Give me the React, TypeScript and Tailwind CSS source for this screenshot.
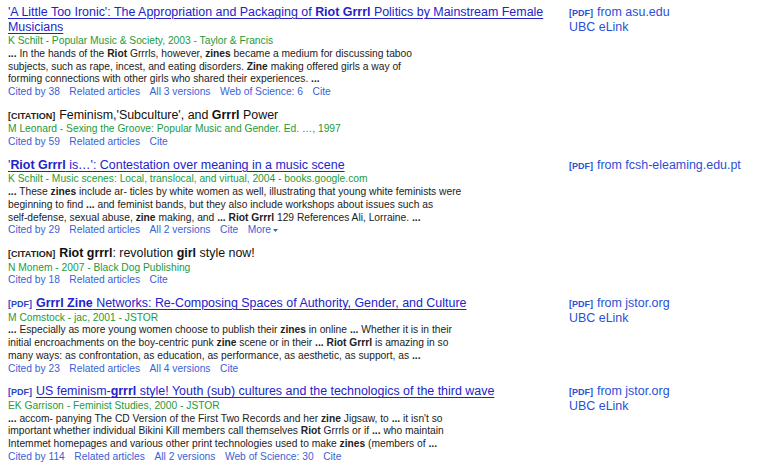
import React from "react";

type Rec = {
  prefix?: "PDF" | "CITATION";
  title: string[];
  isLink: boolean;
  author: string;
  snippet?: string[];
  links: string[];
  more?: boolean;
  right?: { host: string; elink: boolean };
};

function Rich({ text }: { text: string }) {
  const parts = text.split("**");
  return (
    <>
      {parts.map((p, i) =>
        i % 2 === 1 ? (
          <b key={i} className="font-bold">
            {p}
          </b>
        ) : (
          <React.Fragment key={i}>{p}</React.Fragment>
        )
      )}
    </>
  );
}

const recs: Rec[] = [
  {
    title: [
      "'A Little Too Ironic': The Appropriation and Packaging of **Riot Grrrl** Politics by Mainstream Female",
      "Musicians",
    ],
    isLink: true,
    author: "K Schilt - Popular Music & Society, 2003 - Taylor & Francis",
    snippet: [
      "**...** In the hands of the **Riot** Grrrls, however, **zines** became a medium for discussing taboo",
      "subjects, such as rape, incest, and eating disorders. **Zine** making offered girls a way of",
      "forming connections with other girls who shared their experiences. **...**",
    ],
    links: ["Cited by 38", "Related articles", "All 3 versions", "Web of Science: 6", "Cite"],
    right: { host: "asu.edu", elink: true },
  },
  {
    prefix: "CITATION",
    title: ["Feminism,'Subculture', and **Grrrl** Power"],
    isLink: false,
    author: "M Leonard - Sexing the Groove: Popular Music and Gender. Ed. \u2026, 1997",
    links: ["Cited by 59", "Related articles", "Cite"],
  },
  {
    title: ["'**Riot Grrrl** is\u2026': Contestation over meaning in a music scene"],
    isLink: true,
    author: "K Schilt - Music scenes: Local, translocal, and virtual, 2004 - books.google.com",
    snippet: [
      "**...** These **zines** include ar- ticles by white women as well, illustrating that young white feminists were",
      "beginning to find **...** and feminist bands, but they also include workshops about issues such as",
      "self-defense, sexual abuse, **zine** making, and **... Riot Grrrl** 129 References Ali, Lorraine. **...**",
    ],
    links: ["Cited by 29", "Related articles", "All 2 versions", "Cite"],
    more: true,
    right: { host: "fcsh-eleaming.edu.pt", elink: false },
  },
  {
    prefix: "CITATION",
    title: ["**Riot grrrl**: revolution **girl** style now!"],
    isLink: false,
    author: "N Monem - 2007 - Black Dog Publishing",
    links: ["Cited by 18", "Related articles", "Cite"],
  },
  {
    prefix: "PDF",
    title: ["**Grrrl Zine** Networks: Re-Composing Spaces of Authority, Gender, and Culture"],
    isLink: true,
    author: "M Comstock - jac, 2001 - JSTOR",
    snippet: [
      "**...** Especially as more young women choose to publish their **zines** in online **...** Whether it is in their",
      "initial encroachments on the boy-centric punk **zine** scene or in their **... Riot Grrrl** is amazing in so",
      "many ways: as confrontation, as education, as performance, as aesthetic, as support, as **...**",
    ],
    links: ["Cited by 23", "Related articles", "All 4 versions", "Cite"],
    right: { host: "jstor.org", elink: true },
  },
  {
    prefix: "PDF",
    title: ["US feminism-**grrrl** style! Youth (sub) cultures and the technologics of the third wave"],
    isLink: true,
    author: "EK Garrison - Feminist Studies, 2000 - JSTOR",
    snippet: [
      "**...** accom- panying The CD Version of the First Two Records and her **zine** Jigsaw, to **...** it isn't so",
      "important whether individual Bikini Kill members call themselves **Riot** Grrrls or if **...** who maintain",
      "Intemmet homepages and various other print technologies used to make **zines** (members of **...**",
    ],
    links: ["Cited by 114", "Related articles", "All 2 versions", "Web of Science: 30", "Cite"],
    right: { host: "jstor.org", elink: true },
  },
];

function Record({ r }: { r: Rec }) {
  return (
    <div className="flex">
      <div className="w-[561px] shrink-0">
        <div className="text-[12.45px] leading-[14.5px] mb-[1px]">
          {r.title.map((line, i) => (
            <div key={i} className="whitespace-nowrap">
              {i === 0 && r.prefix && (
                <span
                  className={
                    "text-[9px] leading-none font-bold mr-[4px] " +
                    (r.prefix === "PDF" ? "text-[#2b47c9]" : "text-[#222]")
                  }
                >
                  [{r.prefix}]
                </span>
              )}
              {r.isLink ? (
                <span className="text-[#2323c9] underline decoration-[1px] underline-offset-[1.5px]">
                  <Rich text={line} />
                </span>
              ) : (
                <span className="text-[#111]">
                  <Rich text={line} />
                </span>
              )}
            </div>
          ))}
        </div>
        <div className="text-[10.25px] leading-[12.75px] text-[#1c9a3c] whitespace-nowrap">
          {r.author}
        </div>
        {r.snippet && (
          <div className="text-[10.25px] leading-[12.75px] text-[#222]">
            {r.snippet.map((l, i) => (
              <div key={i} className="whitespace-nowrap">
                <Rich text={l} />
              </div>
            ))}
          </div>
        )}
        <div className="flex gap-[9.5px] text-[10.25px] leading-[12.75px] text-[#3a5fd6] whitespace-nowrap">
          {r.links.map((l) => (
            <span key={l}>{l}</span>
          ))}
          {r.more && (
            <span className="flex items-center gap-[2px]">
              More
              <svg width="5" height="3" viewBox="0 0 5 3">
                <path d="M0 0 L5 0 L2.5 3 Z" fill="#3a5fd6" />
              </svg>
            </span>
          )}
        </div>
      </div>
      {r.right && (
        <div className="text-[12.45px] leading-[14.5px] text-[#2b4fd6] whitespace-nowrap">
          <div>
            <span className="text-[9px] leading-none font-bold mr-[4px]">[PDF]</span>
            from {r.right.host}
          </div>
          {r.right.elink && <div>UBC eLink</div>}
        </div>
      )}
    </div>
  );
}

export default function App() {
  return (
    <div
      className="w-[759px] h-[465px] overflow-hidden bg-white pl-[8px] pt-[5px] flex flex-col gap-[9px]"
      style={{ fontFamily: '"Liberation Sans", Arial, sans-serif' }}
    >
      {recs.map((r, i) => (
        <Record key={i} r={r} />
      ))}
    </div>
  );
}
